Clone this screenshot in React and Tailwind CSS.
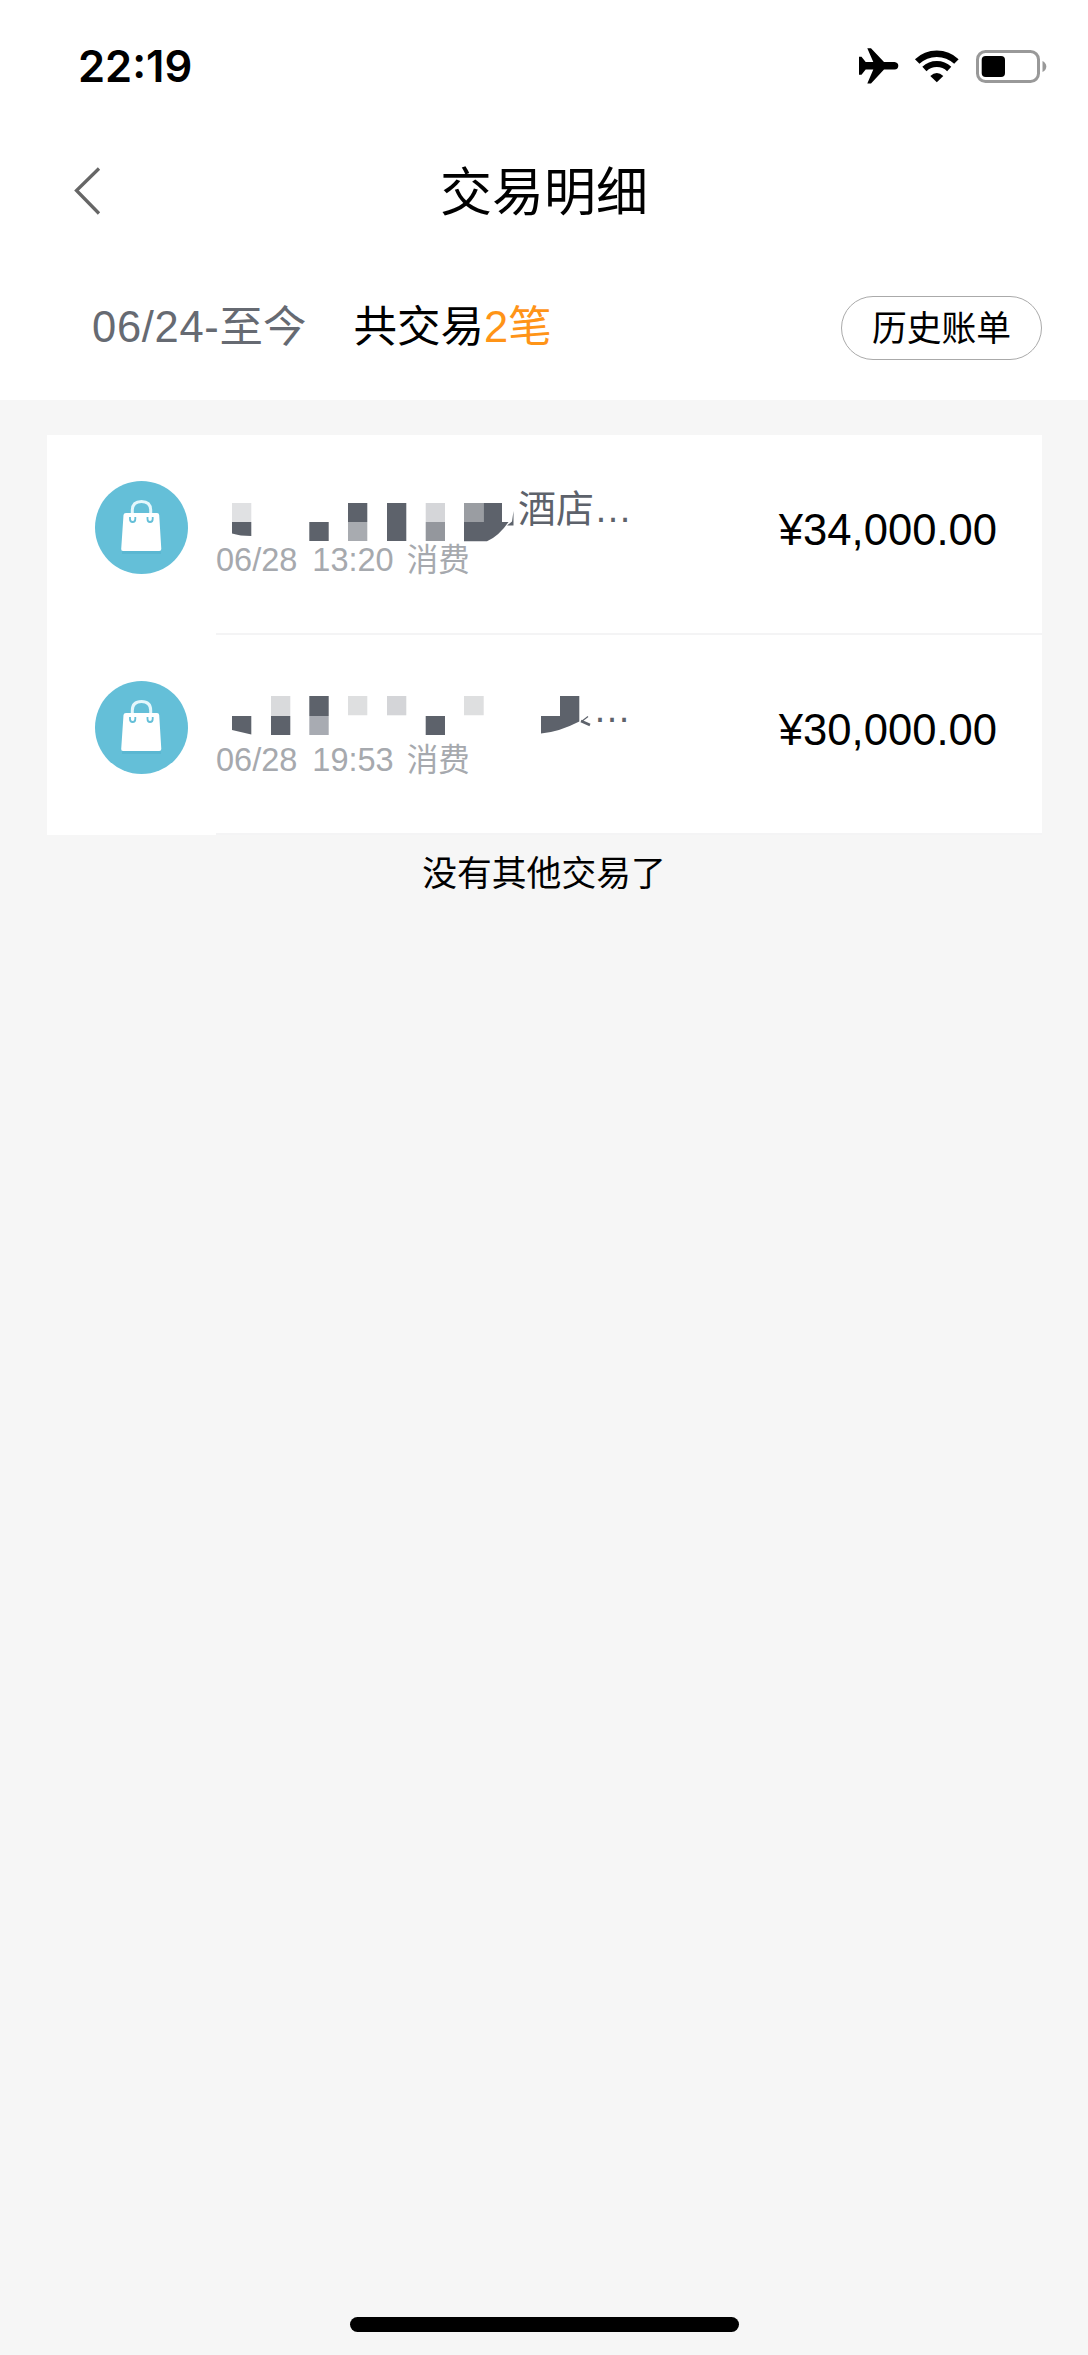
const StatusBar = () => (
  <div className="flex h-[132px] items-start justify-between pl-[78px] pr-[41px]">
    <div className="mt-[40px] font-[Inter] text-[43.5px] leading-[52px] font-semibold">22:19</div>
    <div className="mt-[46px] flex items-center">
      <svg className="h-[40px] w-[190px]" viewBox="0 0 190 40">
        {/* airplane */}
        <path
          d="M2 10.700H4.500L8.700 16H16.300L10.300 2.300H14L27 15.900H37.500Q41.300 16.300 41.300 19.800Q41.300 23.300 37.500 23.600H27L14 37.600H10.300L16.300 23.600H8.700L4.500 28.700H2Z"
          fill="#000"
        />
        {/* wifi */}
        <path d="M60.200 15.500A28.500 28.500 0 0 1 99.400 15.500" fill="none" stroke="#000" strokeWidth="6.500" />
        <path d="M67.400 23A18 18 0 0 1 92.200 23" fill="none" stroke="#000" strokeWidth="6" />
        <path d="M73.300 30Q79.800 23.800 86.300 30L79.800 36.300Z" fill="#000" />
        {/* battery */}
        <rect x="120.500" y="5.500" width="61" height="30" rx="8" fill="none" stroke="#999" strokeWidth="3" />
        <rect x="124.700" y="10" width="23.300" height="21" rx="4" fill="#000" />
        <path d="M185.500 15Q189.300 17 189.300 20.500Q189.300 24 185.500 26Z" fill="#999" />
      </svg>
    </div>
  </div>
);

const Header = () => (
  <header className="grid h-[120px] grid-cols-[200px_1fr_200px] items-center">
    <svg className="ml-[72px] h-[50px] w-[30px]" viewBox="0 0 30 50" fill="none" stroke="#666" strokeWidth="3.300">
      <path d="M27 1.500L4.500 23.500L27 46.500" />
    </svg>
    <h1 className="pt-[2px] text-center text-[52px] leading-[60px]">交易明细</h1>
  </header>
);

const Summary = () => (
  <div className="flex h-[148px] items-start justify-between pl-[92px] pr-[46px] pt-[44px]">
    <div className="flex h-[64px] items-center text-[43.5px]">
      <span className="text-[#666a72]">
        <span className="tracking-[0.7px]">06/24-</span>至今
      </span>
      <span className="ml-[47px]">
        共交易<span className="text-[#ff9417]">2笔</span>
      </span>
    </div>
    <button className="h-[64px] w-[201px] rounded-full border border-[#aaa] pt-[2px] text-[34.8px]">历史账单</button>
  </div>
);

const BagIcon = () => (
  <svg className="h-[93px] w-[93px] shrink-0" viewBox="0 0 93 93">
    <circle cx="46.500" cy="46.500" r="46.500" fill="#64bfd8" />
    <path d="M27 66L27 73H66L66 66Z" fill="#4fb0cb" opacity="0.5" />
    <path d="M37.300 34V29.500Q37.300 20.500 46.500 20.500Q55.700 20.500 55.700 29.500V34" fill="none" stroke="#e4f7fc" strokeWidth="3" />
    <path d="M31 32H62Q64 32 64.200 34L66.300 68Q66.300 70 64.300 70H28Q26 70 26.200 68L28.500 34Q28.700 32 31 32Z" fill="#fff" />
    <path d="M35 36V38Q35 41 37.700 41Q40.300 41 40.300 38V36" fill="none" stroke="#64bfd8" strokeWidth="1.800" />
    <path d="M52.500 36V38Q52.500 41 55 41Q57.700 41 57.700 38V36" fill="none" stroke="#64bfd8" strokeWidth="1.800" />
  </svg>
);

// mosaic over the merchant names
const MaskOne = () => (
  <svg className="h-[60px] w-[302px] shrink-0 self-start" viewBox="0 -14 302 60">
    <path d="M16 4h19.300v19H16z" fill="#e0e1e3" />
    <path d="M16 23h19.300v14Q24 37 16 34.500z" fill="#5d626b" />
    <path d="M93.300 23h19.400v19H93.300zM132 4h19.300v19H132zM171 4h19.300v38H171z" fill="#5d626b" />
    <path d="M132 23h19.300v19H132z" fill="#a8abb0" />
    <path d="M209.700 4H229v19h-19.300z" fill="#d5d6d9" />
    <path d="M209.700 23H229v19h-19.300z" fill="#94979d" />
    <path d="M248 4h19.500v19H248z" fill="#9a9da2" />
    <path d="M267.500 4H286v19h6.500Q283 37 271 42.300H248V23h19.500z" fill="#5d626b" />
    <path d="M297.500 12v14.500h-6.500l5-4z" fill="#5d626b" />
  </svg>
);

const MaskTwo = () => (
  <svg className="h-[60px] w-[377px] shrink-0 self-start" viewBox="0 -11 377 60">
    <path d="M16 20h19.300v18.500L16 34z" fill="#5d626b" />
    <path d="M55 0h19.300v20H55z" fill="#d9dadc" />
    <path d="M55 20h19.300v19H55zM93.300 0h19.400v20H93.300zM209.700 20H229v19h-19.300z" fill="#5d626b" />
    <path d="M93.300 20h19.400v19H93.300z" fill="#a8abb2" />
    <path d="M132 0h19.300v19.300H132zM248 0h19.700v19.300H248z" fill="#dedfe0" />
    <path d="M171 0h19.300v19.300H171z" fill="#d4d5d8" />
    <path d="M344 0h19.300v25.500Q343 36 325 37.500V20H344z" fill="#5d626b" />
    <path d="M372 20.500L365.500 25.500" fill="none" stroke="#5d626b" strokeWidth="1.200" />
    <path d="M365 25L374 29" fill="none" stroke="#5d626b" strokeWidth="2.500" />
  </svg>
);

const transactions = [
  { id: 1, mask: <MaskOne />, name: '酒店…', time: '13:20', amount: '¥34,000.00' },
  { id: 2, mask: <MaskTwo />, name: '…', time: '19:53', amount: '¥30,000.00' },
];

const Row = ({ item }) => (
  <li className="flex h-[200px] pl-[48px]">
    <div className="pt-[46px]">
      <BagIcon />
    </div>
    <div className="ml-[28px] flex flex-1 justify-between border-b-2 border-[#f4f4f5]">
      <div className="pt-[50px]">
        <div className="flex h-[48px] items-center whitespace-nowrap text-[38px] leading-[48px] text-[#5d626b]">
          {item.mask}
          <span>{item.name}</span>
        </div>
        <div className="flex pt-[4px] text-[32.5px] leading-[46px] text-[#a6a9ae]">
          <span>06/28</span>
          <span className="ml-[15px]">{item.time}</span>
          <span className="ml-[13px] text-[31.5px]">消费</span>
        </div>
      </div>
      <div className="pr-[45px] pt-[65px] text-[43.6px] leading-[60px]">{item.amount}</div>
    </div>
  </li>
);

export default function App() {
  return (
    <div className="flex h-[2355px] w-[1088px] flex-col bg-[#f6f6f6] font-['Liberation_Sans','Noto_Sans_CJK_SC',sans-serif] text-black">
      <div className="bg-white">
        <StatusBar />
        <Header />
        <Summary />
      </div>
      <ul className="ml-[47px] mr-[46px] mt-[35px] bg-white">
        {transactions.map((item) => (
          <Row key={item.id} item={item} />
        ))}
      </ul>
      <p className="mt-[15px] text-center text-[34.8px] leading-[48px]">没有其他交易了</p>
      <div className="mx-auto mb-[23px] mt-auto h-[15px] w-[389px] rounded-full bg-black" />
    </div>
  );
}
